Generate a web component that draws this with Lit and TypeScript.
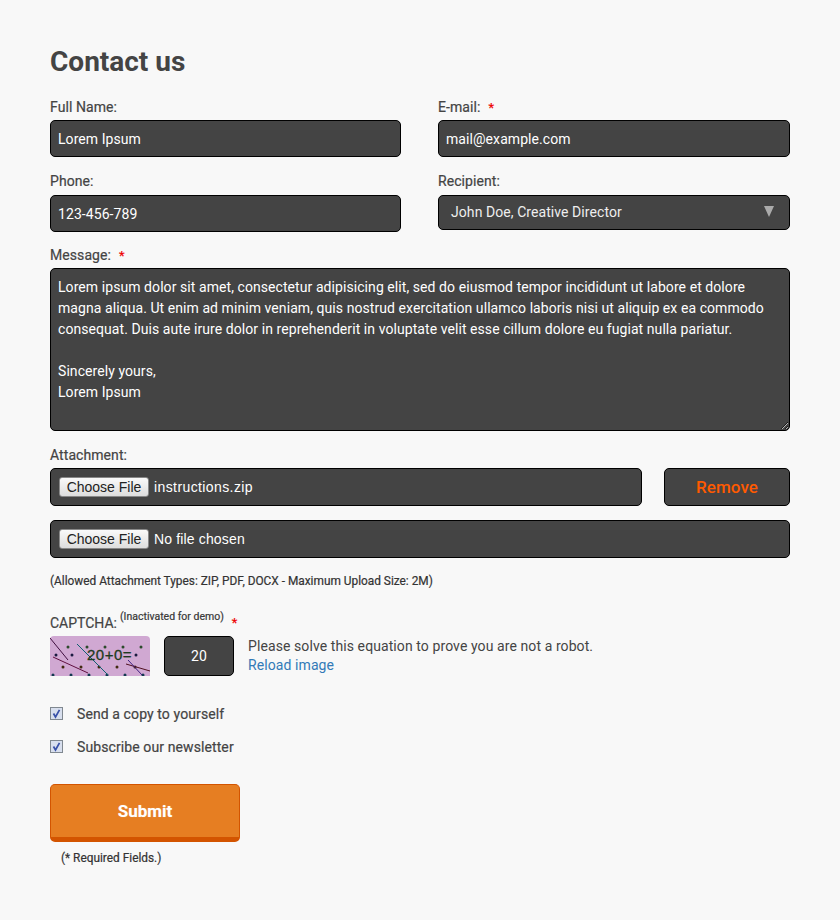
import { LitElement, html, svg, css } from "lit";
import { customElement } from "lit/decorators.js";

const MESSAGE = `Lorem ipsum dolor sit amet, consectetur adipisicing elit, sed do eiusmod tempor incididunt ut labore et dolore magna aliqua. Ut enim ad minim veniam, quis nostrud exercitation ullamco laboris nisi ut aliquip ex ea commodo consequat. Duis aute irure dolor in reprehenderit in voluptate velit esse cillum dolore eu fugiat nulla pariatur.

Sincerely yours,
Lorem Ipsum`;

@customElement("app-root")
export class AppRoot extends LitElement {
  static styles = css`
    :host { display: block; min-height: 920px; background: #f8f8f8; color: #444; font-family: Roboto, sans-serif; font-size: 14px; }
    * { box-sizing: border-box; }
    .page { padding: 45px 50px 0; display: flex; flex-direction: column; }
    h1 { margin: 0 0 19px; font-size: 28px; line-height: 34px; font-weight: 700; color: #444; }
    .grid { display: grid; grid-template-columns: 351px 352px; column-gap: 37px; row-gap: 15px; }
    label { display: block; height: 18px; font-size: 14px; line-height: 18px; color: #444; margin-bottom: 4px; letter-spacing: .07px; -webkit-text-stroke: .2px #444; }
    label.low { margin-bottom: 5px; }
    .req { color: #e00; margin-left: 8px; font-size: 13px; line-height: 0; -webkit-text-stroke: .2px #e00; }
    .box { background: #444; border: 1px solid #000; border-radius: 5px; color: #fff; font-family: Roboto, sans-serif; font-size: 14px; outline: none; letter-spacing: .07px; }
    input.box { display: block; width: 100%; height: 37px; padding: 0 7px; }
    .select { height: 35px; display: flex; align-items: center; justify-content: space-between; padding: 0 15px 2px 12px; color: #eee; }
    .caret { width: 0; height: 0; border-left: 5.5px solid transparent; border-right: 5.5px solid transparent; border-top: 11px solid #aaa; }
    .msg { margin-top: 14px; }
    textarea.box { display: block; width: 100%; height: 163px; padding: 8px 7px 6px; line-height: 21px; resize: vertical; }
    .att { margin-top: 15px; }
    .file-row { display: flex; gap: 22px; margin-bottom: 14px; }
    .file { flex: 1; height: 38px; display: flex; align-items: center; padding: 0 8px; gap: 5px; font-size: 14px; font-family: "Liberation Sans", Arial, sans-serif; color: #fff; }
    .fname { letter-spacing: .4px; }
    .nofile { letter-spacing: .15px; }
    .choose { height: 20px; width: 90px; padding: 0; background: linear-gradient(#fafafa, #ddd); border: 1px solid #888; border-radius: 3px; color: #222; font: 14px "Liberation Sans", Arial, sans-serif; line-height: 16px; }
    .remove { width: 126px; height: 38px; color: #ff5a00; font-size: 17px; font-weight: 500; text-align: center; padding: 0; }
    .note { margin: 2px 0 0; font-size: 11.87px; line-height: 15px; font-weight: 400; color: #333; -webkit-text-stroke: .2px #333; }
    .captcha-l { margin: 24px 0 3px; font-size: 14px; line-height: 20px; height: 20px; display: flex; color: #444; -webkit-text-stroke: .2px #444; }
    .captcha-l sup { font-size: 10.5px; line-height: 12px; margin-left: 3px; margin-top: -2px; color: #333; }
    .captcha-l .req { margin-left: 8px; line-height: 20px; }
    .captcha { display: flex; align-items: flex-start; }
    .img { display: block; width: 100px; height: 40px; }
    input.ans { width: 70px; height: 40px; margin-left: 14px; text-align: center; padding: 0; }
    .help { margin-left: 14px; font-size: 14px; line-height: 20px; color: #444; letter-spacing: .09px; }
    .help a { color: #337ab7; text-decoration: none; display: block; margin-top: -1px; }
    .checks { margin-top: 29px; display: flex; flex-direction: column; gap: 15px; }
    .check { display: flex; align-items: center; margin: 0; height: 18px; font-weight: 400; color: #444; letter-spacing: .1px; }
    .check svg { width: 13px; height: 13px; margin-right: 14px; position: relative; top: -1px; }
    button.submit { margin-top: 28px; width: 190px; height: 58px; background: #e67e22; border: 1px solid #d35400; border-bottom: 5px solid #d35400; border-radius: 5px; color: #fff; font: 700 17px Roboto, sans-serif; padding: 0; text-shadow: 0 0 1px rgba(255,255,255,.4); }
    .foot { margin: 9px 0 0 11px; font-size: 11.87px; line-height: 15px; font-weight: 400; color: #333; -webkit-text-stroke: .2px #333; }
  `;

  private check() {
    return html`<svg viewBox="0 0 13 13" aria-hidden="true">
      <rect x=".5" y=".5" width="12" height="12" fill="#d8dfee" stroke="#808890"></rect>
      <path d="M3.5 6.5 5.5 10 9.5 2.8" fill="none" stroke="#3850a8" stroke-width="1.7"></path>
    </svg>`;
  }

  private captcha() {
    const dots: [number, number, string][] = [];
    for (const x of [18, 37, 55, 73, 91]) dots.push([x, 11, "#2c4a2c"]);
    for (const x of [6, 22, 86]) dots.push([x, 19, "#1a1a40"]);
    for (const x of [13, 31, 49, 67, 85]) dots.push([x, 31, "#402a10"]);
    for (const x of [3, 21, 39, 57, 75, 93]) dots.push([x, 39, "#123a50"]);
    return html`<svg class="img" viewBox="0 0 100 40" aria-label="captcha">
      <path d="M4 0H96A4 4 0 0 1 100 4V40H0V4A4 4 0 0 1 4 0Z" fill="#d0a8d2"></path>
      ${dots.map(([x, y, c]) => svg`<circle cx=${x} cy=${y} r="1.5" fill=${c}></circle>`)}
      <path d="M0 2 18 24" stroke="#401040" fill="none"></path>
      <path d="M3 21 38 37" stroke="#601040" fill="none"></path>
      <path d="M27 8 58 39" stroke="#106070" fill="none"></path>
      <path d="M76 28 100 35" stroke="#501020" fill="none"></path>
      <path d="M78 24 92 39" stroke="#402080" fill="none"></path>
      <text x="37" y="24" font-family="Liberation Sans, sans-serif" font-size="15" fill="#1e3a20" stroke="#1e3a20" stroke-width=".3" letter-spacing=".5">20+0=</text>
    </svg>`;
  }

  render() {
    return html`<div class="page">
      <h1>Contact us</h1>
      <div class="grid">
        <div><label>Full Name:</label><input class="box" .value=${"Lorem Ipsum"} /></div>
        <div><label>E-mail:<span class="req">*</span></label><input class="box" .value=${"mail@example.com"} /></div>
        <div><label class="low">Phone:</label><input class="box" .value=${"123-456-789"} /></div>
        <div><label class="low">Recipient:</label><div class="box select"><span>John Doe, Creative Director</span><span class="caret"></span></div></div>
      </div>
      <div class="msg"><label>Message:<span class="req">*</span></label><textarea class="box" .value=${MESSAGE}></textarea></div>
      <div class="att">
        <label>Attachment:</label>
        <div class="file-row">
          <div class="box file"><button class="choose">Choose File</button><span class="fname">instructions.zip</span></div>
          <button class="box remove">Remove</button>
        </div>
        <div class="file-row">
          <div class="box file"><button class="choose">Choose File</button><span class="nofile">No file chosen</span></div>
        </div>
      </div>
      <p class="note">(Allowed Attachment Types: ZIP, PDF, DOCX - Maximum Upload Size: 2M)</p>
      <div class="captcha-l"><span>CAPTCHA:</span><sup>(Inactivated for demo)</sup><span class="req">*</span></div>
      <div class="captcha">
        ${this.captcha()}
        <input class="box ans" .value=${"20"} />
        <div class="help">Please solve this equation to prove you are not a robot.<a href="#">Reload image</a></div>
      </div>
      <div class="checks">
        <label class="check">${this.check()}Send a copy to yourself</label>
        <label class="check">${this.check()}Subscribe our newsletter</label>
      </div>
      <button class="submit">Submit</button>
      <p class="foot">(* Required Fields.)</p>
    </div>`;
  }
}
